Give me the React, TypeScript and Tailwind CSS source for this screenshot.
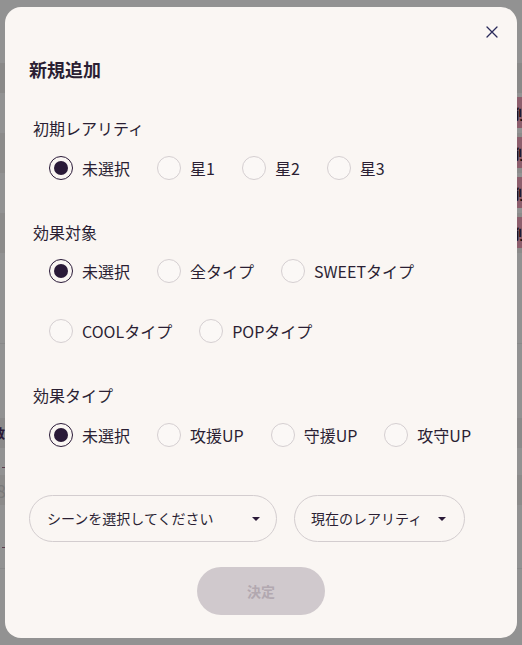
import React from "react";

type Opt = { label: string; selected?: boolean };

function Radio({ label, selected }: Opt) {
  return (
    <div className="flex h-[42px] items-center gap-[9px]">
      {selected ? (
        <span className="flex h-6 w-6 items-center justify-center rounded-full border-[1.5px] border-[#2a1a38]">
          <span className="h-[14px] w-[14px] rounded-full bg-[#2a1a38]" />
        </span>
      ) : (
        <span className="h-6 w-6 rounded-full border border-[#d5cfd1] bg-[#fbf8f6]" />
      )}
      <span className="text-[16px] leading-6 text-[#2b1f33]">{label}</span>
    </div>
  );
}

function RadioRow({ opts, className }: { opts: Opt[]; className?: string }) {
  return (
    <div className={"flex flex-wrap gap-x-[27px] gap-y-[18px] pl-[16px] " + (className ?? "")}>
      {opts.map((o) => (
        <Radio key={o.label} {...o} />
      ))}
    </div>
  );
}

function Caret() {
  return (
    <svg width="8" height="4" viewBox="0 0 8 4" className="shrink-0">
      <path d="M0 0h8L4 4z" fill="#2a1a38" />
    </svg>
  );
}

function PinkRow({ dark }: { dark?: boolean }) {
  return (
    <div className={"flex h-[40px] justify-end pt-[4px] " + (dark ? "bg-[#8c8b8a]" : "")}>
      <div className="flex h-[31px] w-[12px] items-center overflow-hidden bg-[#8d5e6c] pl-[1px] text-[14px] font-bold leading-none text-[#1a1015]">
        削
      </div>
    </div>
  );
}

export default function App() {
  return (
    <div className="relative h-[645px] w-[522px] overflow-hidden bg-[#929292] font-['Noto_Sans_CJK_JP','Noto_Sans',sans-serif]">
      {/* dimmed page behind the dialog */}
      <div className="flex flex-col">
        <div className="h-[63px]" />
        <div className="h-[30px] bg-[#8a8988]" />
        <PinkRow />
        <PinkRow dark />
        <PinkRow />
        <PinkRow dark />
        <div className="h-[90px]" />
        <div className="h-px bg-[#898989]" />
        <div className="h-[74px]" />
        <div className="flex h-[30px] items-center bg-[#8b8a8a] text-[13px] font-bold text-[#2a1a38]">
          <span className="-ml-[8px]">数</span>
        </div>
        <div className="flex h-[20px] items-end">
          <div className="ml-[2px] h-px w-[4px] bg-[#5a3a4a]" />
        </div>
        <div className="mt-[7px] flex h-[30px] items-center bg-[#8c8b8a] text-[18px] text-[#7a7a7a]">
          <span className="-ml-[4px]">8</span>
        </div>
        <div className="flex h-[43px] items-end">
          <div className="ml-[2px] h-px w-[4px] bg-[#5a3a4a]" />
        </div>
        <div className="mt-[20px] h-px bg-[#898989]" />
      </div>

      {/* dialog */}
      <div className="absolute left-[5px] top-[7px] flex h-[631px] w-[512px] flex-col rounded-[16px] bg-[#faf6f3] px-[24px]">
        <div className="flex justify-end pt-[19px]">
          <button className="-mr-[5px] flex h-[12px] w-[12px] items-center justify-center">
            <svg width="12" height="12" viewBox="0 0 12 12">
              <path d="M1 1l10 10M11 1L1 11" stroke="#2a2a5a" strokeWidth="1.3" strokeLinecap="round" />
            </svg>
          </button>
        </div>

        <h2 className="mt-[18px] h-[27px] text-[18px] font-bold leading-[27px] text-[#2b1f33]">新規追加</h2>

        <div className="px-[4px]">
          <div className="mt-[33px] h-6 text-[16px] leading-6 text-[#2b1f33]">初期レアリティ</div>
          <RadioRow
            className="mt-[7px]"
            opts={[{ label: "未選択", selected: true }, { label: "星1" }, { label: "星2" }, { label: "星3" }]}
          />

          <div className="mt-[31px] h-6 text-[16px] leading-6 text-[#2b1f33]">効果対象</div>
          <RadioRow
            className="mt-[6px]"
            opts={[
              { label: "未選択", selected: true },
              { label: "全タイプ" },
              { label: "SWEETタイプ" },
              { label: "COOLタイプ" },
              { label: "POPタイプ" },
            ]}
          />

          <div className="mt-[31px] h-6 text-[16px] leading-6 text-[#2b1f33]">効果タイプ</div>
          <RadioRow
            className="mt-[7px]"
            opts={[{ label: "未選択", selected: true }, { label: "攻援UP" }, { label: "守援UP" }, { label: "攻守UP" }]}
          />
        </div>

        <div className="mt-[39px] flex gap-[17px]">
          <div className="flex h-[47px] w-[248px] items-center justify-between rounded-full border border-[#d3cdcf] pl-[17px] pr-[16px]">
            <span className="text-[14px] text-[#2b1f33]">シーンを選択してください</span>
            <Caret />
          </div>
          <div className="flex h-[47px] w-[171px] items-center justify-between rounded-full border border-[#d3cdcf] pl-[16px] pr-[18px]">
            <span className="text-[14px] text-[#2b1f33]">現在のレアリティ</span>
            <Caret />
          </div>
        </div>

        <button className="mx-auto mt-[25px] h-[48px] w-[128px] rounded-full bg-[#d0c9cd] text-[14px] font-bold text-[#b2a8b0]">
          決定
        </button>
      </div>
    </div>
  );
}
